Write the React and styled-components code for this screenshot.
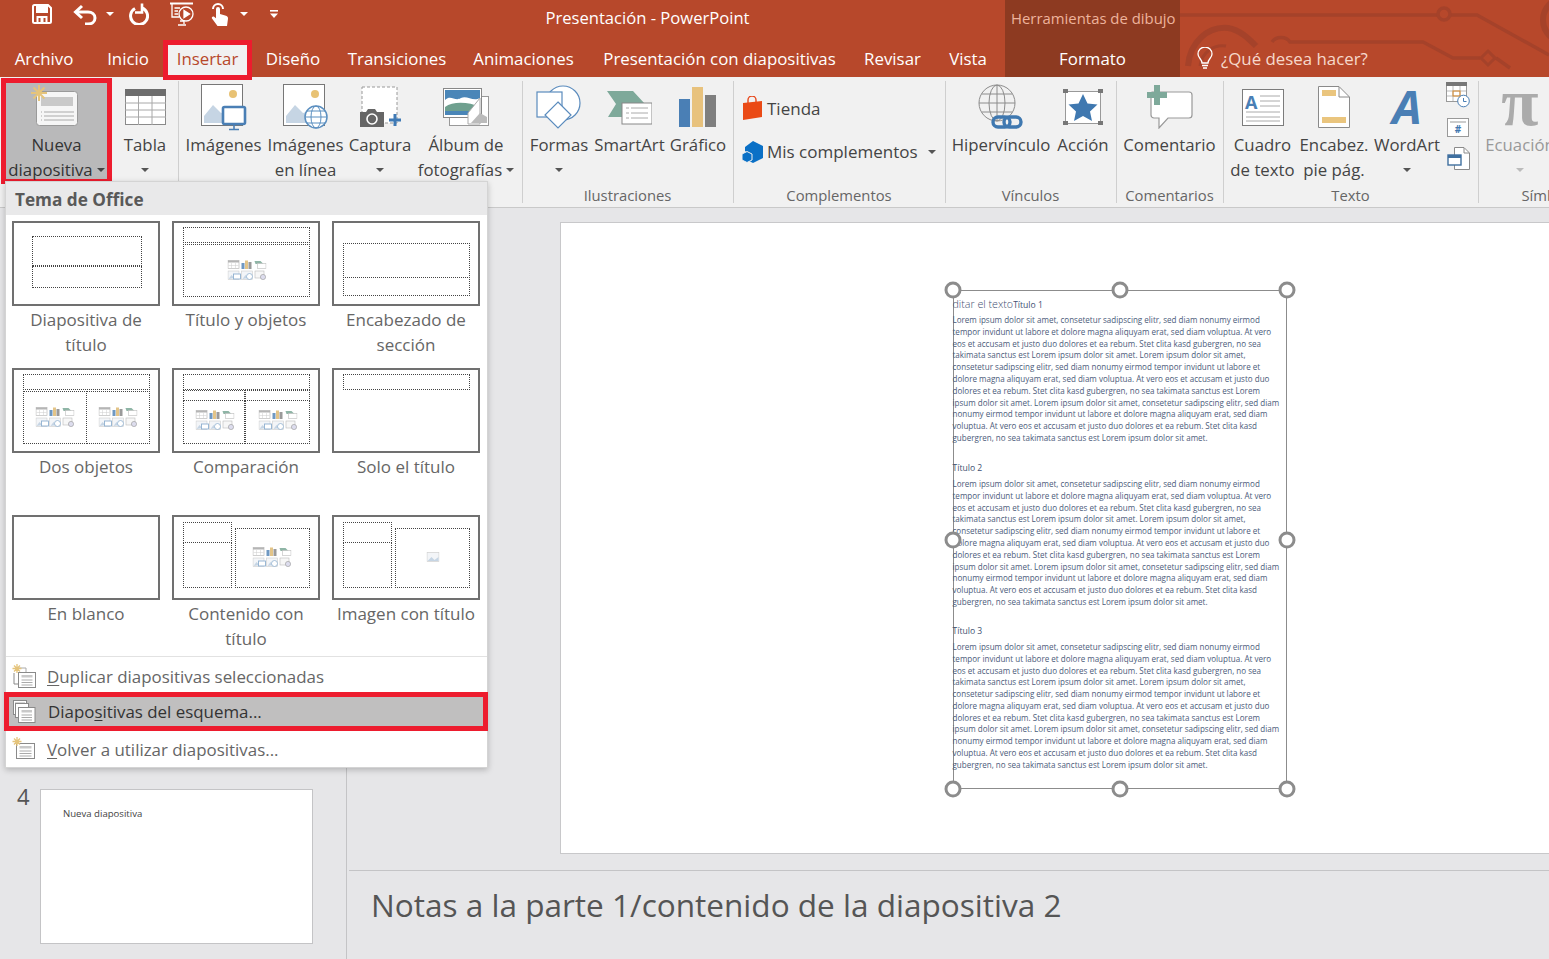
import React from "react";
import styled, { createGlobalStyle } from "styled-components";

const FONT = `"Open Sans", "Noto Sans", "Liberation Sans", sans-serif`;

const GlobalStyle = createGlobalStyle`
  html, body {
    margin: 0;
    padding: 0;
    background: #e6e6e8;
  }
  body {
    font-family: ${FONT};
  }
`;

const LOREM = [
  "Lorem ipsum dolor sit amet, consetetur sadipscing elitr, sed diam nonumy eirmod",
  "tempor invidunt ut labore et dolore magna aliquyam erat, sed diam voluptua. At vero",
  "eos et accusam et justo duo dolores et ea rebum. Stet clita kasd gubergren, no sea",
  "takimata sanctus est Lorem ipsum dolor sit amet. Lorem ipsum dolor sit amet,",
  "consetetur sadipscing elitr, sed diam nonumy eirmod tempor invidunt ut labore et",
  "dolore magna aliquyam erat, sed diam voluptua. At vero eos et accusam et justo duo",
  "dolores et ea rebum. Stet clita kasd gubergren, no sea takimata sanctus est Lorem",
  "ipsum dolor sit amet. Lorem ipsum dolor sit amet, consetetur sadipscing elitr, sed diam",
  "nonumy eirmod tempor invidunt ut labore et dolore magna aliquyam erat, sed diam",
  "voluptua. At vero eos et accusam et justo duo dolores et ea rebum. Stet clita kasd",
  "gubergren, no sea takimata sanctus est Lorem ipsum dolor sit amet.",
];

const TABS = [
  { label: "Archivo", w: 88 },
  { label: "Inicio", w: 80 },
  { label: "Insertar", w: 89, active: true },
  { label: "Diseño", w: 82 },
  { label: "Transiciones", w: 126 },
  { label: "Animaciones", w: 127 },
  { label: "Presentación con diapositivas", w: 265 },
  { label: "Revisar", w: 81 },
  { label: "Vista", w: 70 },
];

const Page = styled.div`
  position: relative;
  width: 1549px;
  height: 959px;
  overflow: hidden;
  display: flex;
  flex-direction: column;
  background: #e6e6e8;
`;

/* ---------- title + tabs ---------- */
const Header = styled.header`
  position: relative;
  height: 77px;
  background: #b7482b;
  color: #fff;
  flex-shrink: 0;
`;

const Circuit = styled.svg`
  position: absolute;
  left: 1180px;
  top: 0;
`;

const TitleRow = styled.div`
  position: relative;
  height: 40px;
  display: flex;
  align-items: flex-start;
`;

const QuickBar = styled.div`
  width: 1005px;
  position: relative;
  display: flex;
  align-items: center;
  height: 28px;
  padding-left: 32px;
  box-sizing: border-box;
`;

const QuickIcon = styled.svg`
  display: block;
  flex-shrink: 0;
  margin-left: ${(p) => p.$ml || 0}px;
`;

const AppTitle = styled.div`
  position: absolute;
  left: 0;
  width: 1295px;
  top: 6px;
  text-align: center;
  font-size: 16.6px;
  line-height: 24px;
  white-space: nowrap;
  pointer-events: none;
`;

const ContextPanel = styled.div`
  position: absolute;
  left: 1005px;
  top: 0;
  width: 175px;
  height: 77px;
  background: #8d3a21;
`;

const ContextTitle = styled.div`
  padding: 6px 0 0 6px;
  font-size: 14.9px;
  line-height: 24px;
  color: #eeb39c;
  white-space: nowrap;
`;

const TabRow = styled.nav`
  position: relative;
  height: 37px;
  display: flex;
  font-size: 16.85px;
`;

const Tab = styled.div`
  box-sizing: border-box;
  width: ${(p) => p.$w}px;
  height: 37px;
  line-height: 37px;
  text-align: center;
  white-space: nowrap;
  color: #fff;
`;

const ActiveTab = styled(Tab)`
  position: relative;
  z-index: 2;
  margin-left: -5px;
  height: 40px;
  background: #f1f1f1;
  color: #b7482b;
  border: 5px solid #ed1c2e;
  line-height: 27px;
`;

const FormatTab = styled(Tab)`
  position: relative;
  margin-left: 2px;
`;

const Search = styled.div`
  position: relative;
  display: flex;
  align-items: center;
  height: 37px;
  margin-left: 17px;
  gap: 8px;
  color: #f6d9cc;
  white-space: nowrap;
`;

/* ---------- ribbon ---------- */
const Ribbon = styled.section`
  height: 131px;
  box-sizing: border-box;
  display: flex;
  background: #f1f1f1;
  border-bottom: 1px solid #c9c9c9;
  flex-shrink: 0;
  color: #444;
  font-size: 17px;
`;

const RibbonGroup = styled.div`
  box-sizing: border-box;
  width: ${(p) => p.$w}px;
  flex-shrink: 0;
  position: relative;
  display: flex;
  flex-direction: column;
  padding-top: 5px;
  &::after {
    content: "";
    position: absolute;
    right: -1px;
    top: 4px;
    bottom: 4px;
    width: 1px;
    background: #cfcfcf;
  }
`;

const GroupBody = styled.div`
  height: 102px;
  display: flex;
  gap: ${(p) => p.$gap || 5}px;
  padding-left: ${(p) => p.$pad ?? 7}px;
`;

const GroupLabel = styled.div`
  height: 22px;
  line-height: 22px;
  text-align: center;
  font-size: 14.8px;
  color: #666;
  white-space: nowrap;
`;

const RibbonButton = styled.div`
  box-sizing: border-box;
  width: ${(p) => p.$w}px;
  flex-shrink: 0;
  display: flex;
  flex-direction: column;
  align-items: center;
  color: ${(p) => (p.$off ? "#999" : "#444")};
  white-space: nowrap;
  font-size: 16.8px;
`;

const NewSlideButton = styled(RibbonButton)`
  width: 111px;
  height: 106px;
  margin-top: -4px;
  margin-left: 1px;
  border: 5px solid #ed1c2e;
  background: #b9b9ba;
  color: #333;
`;

const IconBox = styled.div`
  height: ${(p) => p.$h || 50}px;
  display: flex;
  align-items: center;
  justify-content: center;
  flex-shrink: 0;
`;

const BtnLine = styled.div`
  height: 25px;
  line-height: 25px;
  display: flex;
  align-items: center;
  justify-content: center;
  gap: 4px;
`;

const Caret = styled.span`
  display: inline-block;
  width: 0;
  height: 0;
  border-left: 4px solid transparent;
  border-right: 4px solid transparent;
  border-top: 4px solid ${(p) => p.$c || "#555"};
  margin-left: ${(p) => p.$ml || 0}px;
`;

const ComplementRows = styled.div`
  display: flex;
  flex-direction: column;
  gap: 16px;
  padding-top: 13px;
`;

const ComplementRow = styled.div`
  display: flex;
  align-items: center;
  gap: 4px;
  height: 27px;
  white-space: nowrap;
`;

const SmallIcons = styled.div`
  display: flex;
  flex-direction: column;
  align-items: center;
  gap: 10px;
`;

/* ---------- workspace ---------- */
const Workspace = styled.main`
  flex: 1;
  display: flex;
  min-height: 0;
`;

const SlidesPane = styled.aside`
  box-sizing: border-box;
  width: 347px;
  flex-shrink: 0;
  border-right: 1px solid #c4c4c6;
  display: flex;
  align-items: flex-end;
  padding: 0 0 15px 17px;
  gap: 14px;
`;

const SlideNumber = styled.div`
  align-self: flex-end;
  height: 154px;
  font-size: 22px;
  line-height: 12px;
  color: #555;
  width: 9px;
`;

const SlideThumb = styled.div`
  box-sizing: border-box;
  width: 273px;
  height: 155px;
  background: #fff;
  border: 1px solid #c4c4c6;
  padding: 18px 0 0 22px;
  font-size: 9.6px;
  line-height: 12px;
  color: #444;
`;

const MainColumn = styled.div`
  flex: 1;
  min-width: 0;
  display: flex;
  flex-direction: column;
`;

const Canvas = styled.div`
  height: 662px;
  box-sizing: border-box;
  padding: 14px 0 0 213px;
  overflow: hidden;
`;

const Slide = styled.div`
  box-sizing: border-box;
  width: 1122px;
  height: 632px;
  background: #fff;
  border: 1px solid #c8c8ca;
  padding: 67px 0 0 392px;
`;

const TextBox = styled.div`
  position: relative;
  box-sizing: border-box;
  width: 334px;
  height: 499px;
  border: 1.5px solid #8c8c8c;
  padding-top: 6px;
  color: #4b5b7a;
`;

const Handle = styled.span`
  position: absolute;
  box-sizing: border-box;
  width: 17px;
  height: 17px;
  border-radius: 50%;
  border: 3px solid #8c8c8c;
  background: #fff;
  left: calc(${(p) => p.$x}% + ${(p) => (p.$x - 50) / 50}px);
  top: calc(${(p) => p.$y}% + ${(p) => (p.$y - 50) / 50}px);
  transform: translate(-50%, -50%);
`;

const TextClip = styled.div`
  margin-left: -1.5px;
  white-space: nowrap;
  font-size: 8.05px;
  line-height: 11.8px;
`;

const Section = styled.div`
  margin-bottom: ${(p) => p.$mb || 0}px;
`;

const SectionHead = styled.div`
  height: 17px;
  line-height: 15px;
  font-size: 8.6px;
  color: #3f5173;
`;

const EditHint = styled.span`
  font-size: 10.7px;
  font-weight: 300;
`;

const BodyLine = styled.div`
  height: 11.8px;
`;

const Notes = styled.div`
  flex: 1;
  margin-left: 2px;
  border-top: 1px solid #c4c4c6;
  padding: 12px 0 0 22px;
  font-size: 31.55px;
  line-height: 44px;
  color: #555;
  white-space: nowrap;
`;

/* ---------- layouts menu ---------- */
const Menu = styled.div`
  position: absolute;
  left: 5px;
  top: 181px;
  width: 483px;
  height: 587px;
  background: #fff;
  border: 1px solid #d4d4d4;
  box-sizing: border-box;
  box-shadow: 0 2px 6px rgba(0, 0, 0, 0.22);
  display: flex;
  flex-direction: column;
  z-index: 3;
`;

const MenuHead = styled.div`
  height: 33px;
  line-height: 35px;
  background: #e9e9ea;
  padding-left: 9px;
  font-size: 17.2px;
  font-weight: 700;
  color: #595959;
  flex-shrink: 0;
`;

const LayoutGrid = styled.div`
  display: grid;
  grid-template-columns: repeat(3, 148px);
  grid-auto-rows: 147px;
  column-gap: 12px;
  padding: 6px 0 0 6px;
  height: 441px;
  box-sizing: border-box;
  flex-shrink: 0;
`;

const LayoutCell = styled.div`
  display: flex;
  flex-direction: column;
  align-items: center;
`;

const LayoutThumb = styled.div`
  position: relative;
  box-sizing: border-box;
  width: 148px;
  height: 85px;
  border: 2px solid #707070;
  background: #fff;
`;

const Placeholder = styled.div`
  position: absolute;
  box-sizing: border-box;
  left: ${(p) => p.$x - 2}px;
  top: ${(p) => p.$y - 2}px;
  width: ${(p) => p.$w}px;
  height: ${(p) => p.$h}px;
  border: 1px dotted #444;
`;

const MiniWrap = styled.div`
  position: absolute;
  left: ${(p) => p.$x - 2}px;
  top: ${(p) => p.$y - 2}px;
  transform: translate(-50%, -50%);
  line-height: 0;
`;

const LayoutName = styled.div`
  width: 156px;
  margin-top: 1px;
  text-align: center;
  font-size: 17px;
  line-height: 25px;
  color: #666;
`;

const MenuList = styled.div`
  border-top: 1px solid #e2e2e2;
  padding-top: 1px;
  display: flex;
  flex-direction: column;
`;

const MenuItem = styled.div`
  box-sizing: border-box;
  height: 36px;
  display: flex;
  align-items: center;
  gap: 11px;
  padding-left: 6px;
  font-size: 16.9px;
  color: #666;
  white-space: nowrap;
  u {
    text-underline-offset: 2px;
  }
`;

const SelectedItem = styled(MenuItem)`
  position: relative;
  height: 39px;
  margin: -2px -1px 0 -2px;
  padding-left: 3px;
  border: 5px solid #ed1c2e;
  background: #c0bfbf;
  color: #333;
  gap: 12px;
`;

/* ---------- icons ---------- */
const CIRCUIT = "#a5422a";

const CircuitArt = () => (
  <Circuit width="369" height="77" viewBox="0 0 369 77" fill="none" stroke={CIRCUIT} strokeWidth="3.5">
    <path d="M0 15H258M270 15H297L369 55" />
    <circle cx="264" cy="14" r="6" />
    <path d="M8 66C10 42 28 26 48 28C60 30 68 38 76 46" strokeWidth="6" />
    <path d="M20 66C22 52 34 44 46 46" strokeWidth="3" />
    <path d="M92 42C96 36 106 36 110 42H243L273 58H300" />
    <path d="M316 58L330 68" />
    <path d="M308 51L315 58L308 65L301 58Z" strokeWidth="3" />
    <circle cx="385" cy="20" r="22" strokeWidth="6" />
  </Circuit>
);

const SaveIcon = () => (
  <QuickIcon width="20" height="20" viewBox="0 0 20 20">
    <path d="M1 2.5A1.5 1.5 0 0 1 2.5 1H16l3 3v13.5a1.5 1.5 0 0 1-1.5 1.5h-15A1.5 1.5 0 0 1 1 17.5Z" fill="none" stroke="#fff" strokeWidth="2" />
    <rect x="4" y="2" width="12" height="7" fill="#fff" />
    <path d="M5.5 19v-6h9v6" fill="none" stroke="#fff" strokeWidth="2" />
    <rect x="8.5" y="14" width="3" height="5" fill="#fff" />
  </QuickIcon>
);

const UndoIcon = () => (
  <QuickIcon $ml={21} width="24" height="21" viewBox="0 0 24 21" fill="none" stroke="#fff" strokeWidth="3">
    <path d="M9 2L2.5 8L9 14" />
    <path d="M3 8H15C19 8 22 10.5 22 14S19 20 15 20H12" />
  </QuickIcon>
);

const RedoIcon = () => (
  <QuickIcon $ml={14} width="21" height="22" viewBox="0 0 21 22" fill="none" stroke="#fff" strokeWidth="3">
    <path d="M7 5.5A8.5 8.5 0 1 0 14 5" />
    <path d="M14 0.5V9.5H7" strokeWidth="2.6" />
  </QuickIcon>
);

const ShowIcon = () => (
  <QuickIcon $ml={21} width="24" height="24" viewBox="0 0 24 24" fill="none" stroke="#fff" strokeWidth="1.3">
    <path d="M0 1.5H23" strokeWidth="2" />
    <path d="M2 2V15H9" />
    <path d="M4.5 6H10M4.5 9H8M4.5 12H8" />
    <circle cx="16" cy="12" r="7" />
    <path d="M14 8.5L19.5 12L14 15.5Z" fill="#fff" />
    <path d="M10 19H14V22M8 23H16" />
  </QuickIcon>
);

const TouchIcon = () => (
  <QuickIcon $ml={17} width="18" height="24" viewBox="0 0 18 24" fill="#fff">
    <path d="M5 7a2 2 0 0 1 4 0v5l6 1.8c1.5.5 2.2 1.5 2 3L16 24H6.5L1 16.5c-.8-1.2.8-2.8 2.1-1.8L5 16.2Z" />
    <path d="M2 7a5 5 0 1 1 10 0" fill="none" stroke="#fff" strokeWidth="2" />
  </QuickIcon>
);

const CustomizeIcon = () => (
  <QuickIcon $ml={22} width="8" height="8" viewBox="0 0 8 8" fill="#fff">
    <rect x="0" y="0" width="8" height="1.6" />
    <path d="M0 3.5H8L4 8Z" />
  </QuickIcon>
);

const BulbIcon = () => (
  <svg width="16" height="23" viewBox="0 0 16 23" fill="none" stroke="#fff" strokeWidth="1.3">
    <path d="M5 16C5 12 1 11 1 7A7 7 0 0 1 15 7C15 11 11 12 11 16Z" />
    <path d="M5 18.5H11M6 21H10" strokeWidth="1.6" />
  </svg>
);

const NewSlideIcon = () => (
  <svg width="52" height="46" viewBox="0 0 52 46">
    <rect x="5.500" y="6.500" width="41" height="34" rx="3" fill="#f6f6f6" stroke="#9a9a9a" />
    <rect x="10" y="12" width="32" height="9" fill="#c9c9c9" />
    <path d="M13 27H43M13 31H43M13 35H43M10 27h1M10 31h1M10 35h1" stroke="#aaa" />
    <path d="M8 0V16M0 8H16M2.500 2.500L13.500 13.500M13.500 2.500L2.500 13.500" stroke="#e5c47b" strokeWidth="2" />
  </svg>
);

const TableIcon = () => (
  <svg width="41" height="36" viewBox="0 0 41 36">
    <rect x="0.5" y="0.5" width="40" height="35" fill="#fff" stroke="#8a8a8a" />
    <rect x="0" y="0" width="41" height="7" fill="#6d6d6d" />
    <path d="M13.5 7V36M27 7V36M0 14H41M0 21H41M0 28H41" stroke="#a8a8a8" />
  </svg>
);

const PhotoBase = () => (
  <>
    <rect x="0.5" y="0.5" width="41" height="41" fill="#fff" stroke="#777" />
    <circle cx="32" cy="10" r="4" fill="#e8c274" />
    <path d="M3 39V32L12 21L20 29L26 27V39Z" fill="#c6d5e4" />
  </>
);

const PicturesIcon = () => (
  <svg width="46" height="47" viewBox="0 0 46 47">
    <PhotoBase />
    <rect x="22" y="23" width="22" height="17" rx="1.5" fill="#fff" stroke="#4a7fb5" strokeWidth="2.6" />
    <path d="M33 41V45M28 45.5H38" stroke="#4a7fb5" strokeWidth="1.6" />
  </svg>
);

const OnlinePicturesIcon = () => (
  <svg width="46" height="47" viewBox="0 0 46 47">
    <PhotoBase />
    <circle cx="33" cy="33" r="11" fill="#fff" stroke="#5b8fc0" strokeWidth="1.5" />
    <ellipse cx="33" cy="33" rx="5" ry="11" fill="none" stroke="#5b8fc0" />
    <path d="M22 33H44M24 27H42M24 39H42" stroke="#5b8fc0" />
  </svg>
);

const CaptureIcon = () => (
  <svg width="42" height="42" viewBox="0 0 42 42">
    <rect x="3" y="1" width="35" height="36" fill="#fff" stroke="#999" strokeDasharray="3 2" />
    <path d="M1 26H7L9 23H16L18 26H25V41H1Z" fill="#666" />
    <circle cx="13" cy="33" r="5" fill="#666" stroke="#fff" strokeWidth="1.6" />
    <path d="M36 28V40M30 34H42" stroke="#3f7ab5" strokeWidth="3" />
  </svg>
);

const AlbumIcon = () => (
  <svg width="46" height="38" viewBox="0 0 46 38">
    <rect x="6.5" y="8.5" width="39" height="29" fill="#fff" stroke="#999" />
    <rect x="0.5" y="0.5" width="38" height="29" fill="#fff" stroke="#888" />
    <rect x="2" y="2" width="35" height="17" fill="#4a86b8" />
    <path d="M2 12C8 6 12 14 18 10C24 7 30 14 37 10V19H2Z" fill="#fff" />
    <path d="M2 19C10 13 26 14 37 19V23H2Z" fill="#6fa08f" />
    <rect x="2" y="23" width="24" height="4" fill="#4a86b8" />
    <path d="M25 25L37 10V36H25Z" fill="#fff" stroke="#aaa" />
    <path d="M28 35L37 25L44 29V35Z" fill="#bbb" />
  </svg>
);

const ShapesIcon = () => (
  <svg width="46" height="44" viewBox="0 0 46 44" fill="#fff" stroke="#5a8bbd" strokeWidth="1.2">
    <circle cx="27" cy="18" r="17" />
    <rect x="1" y="7" width="25" height="25" />
    <path d="M22 17L35 30L22 43L9 30Z" />
  </svg>
);

const SmartArtIcon = () => (
  <svg width="45" height="36" viewBox="0 0 45 36">
    <path d="M0 2H26L38 15V28H1L9 15Z" fill="#7ea99a" />
    <rect x="15" y="14" width="30" height="21" fill="#fff" stroke="#888" />
    <path d="M24 19H41M24 24H41M24 29H41M19 19H22M19 24H22M19 29H22" stroke="#aaa" />
  </svg>
);

const ChartIcon = () => (
  <svg width="38" height="40" viewBox="0 0 38 40">
    <rect x="0" y="12" width="11" height="28" fill="#4a7fb5" />
    <rect x="13" y="0" width="11" height="40" fill="#e8c27d" />
    <rect x="26" y="8" width="11" height="32" fill="#7f7f7f" />
  </svg>
);

const StoreIcon = () => (
  <svg width="21" height="25" viewBox="0 0 21 25">
    <path d="M6 7V4a4 4 0 0 1 8 0v3" fill="none" stroke="#e8481c" strokeWidth="1.4" />
    <path d="M1 7L20 5V21L1 24Z" fill="#ea4a16" />
  </svg>
);

const AddinsIcon = () => (
  <svg width="21" height="22" viewBox="0 0 21 22" fill="#0a70c6">
    <path d="M11 0L21 5V17L11 22L7 20V13L3 10V6Z" />
    <path d="M0 13L5 10.5L10 13V19L5 21.5L0 19Z" stroke="#f1f1f1" />
  </svg>
);

const LinkIcon = () => (
  <svg width="46" height="46" viewBox="0 0 46 46">
    <g fill="none" stroke="#8c8c8c">
      <circle cx="19" cy="19" r="18" />
      <ellipse cx="19" cy="19" rx="8" ry="18" />
      <path d="M19 1V37M1 19H37M4 10H34M4 28H34" />
    </g>
    <g fill="none" stroke="#3f78b0" strokeWidth="3.4">
      <rect x="15" y="33" width="17" height="10" rx="5" />
      <rect x="26" y="33" width="17" height="10" rx="5" />
    </g>
  </svg>
);

const ActionIcon = () => (
  <svg width="40" height="38" viewBox="0 0 40 38">
    <rect x="2.5" y="3.5" width="35" height="32" fill="#fff" stroke="#999" />
    <rect x="0" y="1" width="5" height="4" fill="#777" />
    <rect x="35" y="1" width="5" height="4" fill="#777" />
    <rect x="0" y="33" width="5" height="4" fill="#777" />
    <rect x="35" y="33" width="5" height="4" fill="#777" />
    <path d="M20 6L24.5 15.5L34.5 16.5L27 23.5L29 33L20 28L11 33L13 23.5L5.5 16.5L15.5 15.5Z" fill="#3f78b0" />
  </svg>
);

const CommentIcon = () => (
  <svg width="46" height="44" viewBox="0 0 46 44">
    <path d="M5 7H42A3 3 0 0 1 45 10V30A3 3 0 0 1 42 33H21L12 43V33H7A3 3 0 0 1 4 30V10Z" fill="#fff" stroke="#999" strokeWidth="1.2" />
    <path d="M10 0V20M0 10H20" stroke="#7ea99a" strokeWidth="6" />
  </svg>
);

const TextBoxIcon = () => (
  <svg width="42" height="37" viewBox="0 0 42 37">
    <rect x="0.5" y="0.5" width="41" height="36" fill="#fff" stroke="#7c7c7c" />
    <text x="3" y="20" fontFamily={FONT} fontWeight="700" fontSize="18" fill="#4a7fb5">A</text>
    <path d="M18 7H38M18 12H38M18 17H38M4 23H38M4 28H38M4 32H38" stroke="#aaa" />
  </svg>
);

const HeaderFooterIcon = () => (
  <svg width="32" height="42" viewBox="0 0 32 42">
    <path d="M0.5 0.5H21L31.5 11V41.5H0.5Z" fill="#fff" stroke="#8a8a8a" />
    <path d="M21 1V11H31" fill="none" stroke="#8a8a8a" />
    <rect x="4" y="4" width="14" height="6" fill="#eac57e" />
    <rect x="4" y="31" width="24" height="6" fill="#eac57e" />
  </svg>
);

const OpenSvg = styled.svg`
  overflow: visible;
`;

const WordArtIcon = () => (
  <OpenSvg width="36" height="42" viewBox="0 0 36 42">
    <text x="18" y="38" textAnchor="middle" fontFamily={FONT} fontStyle="italic" fontWeight="700" fontSize="47" fill="#4a7fb5">A</text>
  </OpenSvg>
);

const DateIcon = () => (
  <svg width="24" height="26" viewBox="0 0 24 26">
    <rect x="0.5" y="0.5" width="20" height="19" fill="#fff" stroke="#999" />
    <rect x="0" y="0" width="21" height="4" fill="#777" />
    <path d="M7 4V19M14 4V19M1 9H20M1 14H20" stroke="#bbb" />
    <rect x="7" y="9" width="7" height="5" fill="none" stroke="#d98a2b" />
    <circle cx="17.5" cy="19" r="5.8" fill="#fff" stroke="#4a7fb5" />
    <path d="M17.5 16V19.5H20.5" fill="none" stroke="#4a7fb5" />
  </svg>
);

const NumberIcon = () => (
  <svg width="22" height="19" viewBox="0 0 22 19">
    <rect x="0.5" y="0.5" width="21" height="18" fill="#fff" stroke="#999" />
    <path d="M3 4H19" stroke="#999" />
    <text x="11" y="15" textAnchor="middle" fontFamily={FONT} fontWeight="700" fontSize="10" fill="#3f78b0">#</text>
  </svg>
);

const ObjectIcon = () => (
  <svg width="23" height="23" viewBox="0 0 23 23">
    <path d="M7.5 0.5H17L22.5 6V22.5H7.5Z" fill="#fff" stroke="#8a8a8a" />
    <path d="M17 1V6H22" fill="none" stroke="#8a8a8a" />
    <rect x="1" y="8" width="13" height="10" fill="#fff" stroke="#3f6f9f" strokeWidth="1.4" />
    <rect x="1" y="8" width="13" height="3" fill="#3f6f9f" />
  </svg>
);

const PiIcon = () => (
  <OpenSvg width="42" height="42" viewBox="0 0 42 42">
    <text x="21" y="39" textAnchor="middle" fontFamily={`"Liberation Serif", serif`} fontWeight="700" fontSize="68" fill="#ababab">π</text>
  </OpenSvg>
);

const MiniContent = ({ single }) =>
  single ? (
    <svg width="13" height="10" viewBox="0 0 13 10">
      <rect x="0.5" y="0.5" width="12" height="9" fill="#f3f5f8" stroke="#c9c9c9" strokeWidth="0.6" />
      <path d="M1 9L5 5L8 8L12 5V9Z" fill="#c6d5e4" />
    </svg>
  ) : (
    <svg width="39" height="20" viewBox="0 0 39 20">
      <rect x="0.5" y="0.5" width="11" height="8" fill="#fff" stroke="#bbb" strokeWidth="0.7" />
      <rect x="0.5" y="0.5" width="11" height="2" fill="#b5b5b5" />
      <path d="M4 3V8M8 3V8M1 5.5H11" stroke="#ccc" strokeWidth="0.5" />
      <rect x="14" y="3" width="3" height="6" fill="#6f98c2" />
      <rect x="17.5" y="0.5" width="3" height="8.5" fill="#e3c488" />
      <rect x="21" y="2" width="3" height="7" fill="#9a9a9a" />
      <path d="M27 1H33L36 4H28Z" fill="#8fb5a6" />
      <rect x="30" y="3.5" width="8.5" height="5" fill="#fff" stroke="#bbb" strokeWidth="0.6" />
      <rect x="0.5" y="11" width="11" height="8.5" fill="#f3f5f8" stroke="#ccc" strokeWidth="0.6" />
      <path d="M1 19L4 15L7 18Z" fill="#c6d5e4" />
      <rect x="6" y="14" width="7" height="5" fill="#fff" stroke="#8fb0d0" strokeWidth="0.9" />
      <rect x="14" y="11" width="11" height="8.5" fill="#f3f5f8" stroke="#ccc" strokeWidth="0.6" />
      <path d="M15 19L18 15L21 18Z" fill="#c6d5e4" />
      <circle cx="22" cy="16.5" r="3" fill="#fff" stroke="#8fb0d0" strokeWidth="0.8" />
      <rect x="27.5" y="11" width="9" height="7" fill="#f7f7f7" stroke="#bbb" strokeWidth="0.6" />
      <circle cx="35.5" cy="17" r="2.6" fill="#dde" stroke="#999" strokeWidth="0.6" />
    </svg>
  );

const SlideLines = ({ x, y, w = 22, star }) => (
  <g>
    <rect x={x} y={y} width={w} height={15} fill="#fff" stroke="#8a8a8a" />
    <rect x={x + 3} y={y + 2.5} width={w - 6} height={2.5} fill="#c9c9c9" />
    <path d={`M${x + 3} ${y + 7.5}H${x + w - 3}M${x + 3} ${y + 10}H${x + w - 3}M${x + 3} ${y + 12.5}H${x + w - 3}`} stroke="#aaa" />
    {star && <path d="M5 0V9M.5 4.5H9.5M2 1.5L8 7.500M8 1.5L2 7.500" stroke="#e5c47b" strokeWidth="1.3" />}
  </g>
);

const DuplicateIcon = () => (
  <svg width="24" height="24" viewBox="0 0 24 24">
    <path d="M2 9V20H7" fill="none" stroke="#8a8a8a" />
    <path d="M6 4H14V8" fill="none" stroke="#aaa" />
    <SlideLines x={6.5} y={8.5} w={17} star />
  </svg>
);

const OutlineIcon = () => (
  <svg width="24" height="24" viewBox="0 0 24 24">
    <rect x="1.5" y="0.500" width="13" height="14" fill="#fff" stroke="#8a8a8a" />
    <path d="M3 3H13M3 6H13M3 9H13" stroke="#aaa" />
    <rect x="3.500" y="3.500" width="13" height="14" fill="#fff" stroke="#8a8a8a" />
    <SlideLines x={6.5} y={7.5} w={16.5} />
  </svg>
);

const ReuseIcon = () => (
  <svg width="24" height="24" viewBox="0 0 24 24">
    <SlideLines x={4.5} y={6.5} w={18} star />
  </svg>
);

/* ---------- data for the layout thumbnails ---------- */
const TOP = { x: 11, y: 6, w: 127, h: 16 };
const LAYOUTS = [
  {
    name: "Diapositiva de título",
    boxes: [
      { x: 19.5, y: 15, w: 110, h: 30 },
      { x: 19.5, y: 44.5, w: 110, h: 22 },
    ],
  },
  {
    name: "Título y objetos",
    boxes: [TOP, { x: 11, y: 23, w: 127, h: 53 }],
    minis: [{ x: 74.5, y: 49 }],
  },
  {
    name: "Encabezado de sección",
    boxes: [
      { x: 11, y: 22, w: 127, h: 35 },
      { x: 11, y: 56, w: 127, h: 19 },
    ],
  },
  {
    name: "Dos objetos",
    boxes: [TOP, { x: 11, y: 23, w: 64, h: 53 }, { x: 74, y: 23, w: 64, h: 53 }],
    minis: [{ x: 43, y: 49 }, { x: 106, y: 49 }],
  },
  {
    name: "Comparación",
    boxes: [
      TOP,
      { x: 11, y: 22, w: 62, h: 11 },
      { x: 73, y: 22, w: 65, h: 11 },
      { x: 11, y: 32, w: 62, h: 44 },
      { x: 73, y: 32, w: 65, h: 44 },
    ],
    minis: [{ x: 43, y: 52 }, { x: 106, y: 52 }],
  },
  { name: "Solo el título", boxes: [TOP] },
  { name: "En blanco", boxes: [] },
  {
    name: "Contenido con título",
    boxes: [
      { x: 11, y: 7, w: 49, h: 21 },
      { x: 11, y: 27, w: 49, h: 46 },
      { x: 63, y: 13, w: 75, h: 60 },
    ],
    minis: [{ x: 100, y: 42 }],
  },
  {
    name: "Imagen con título",
    boxes: [
      { x: 11, y: 7, w: 49, h: 21 },
      { x: 11, y: 27, w: 49, h: 46 },
      { x: 63, y: 13, w: 75, h: 60 },
    ],
    minis: [{ x: 100.5, y: 42, single: true }],
  },
];

const HANDLES = [
  [0, 0],
  [50, 0],
  [100, 0],
  [0, 50],
  [100, 50],
  [0, 100],
  [50, 100],
  [100, 100],
];

const SECTIONS = [
  { head: <><EditHint>ditar el texto</EditHint>Título 1</>, mb: 17.2 },
  { head: "Título 2", mb: 16.2 },
  { head: "Título 3", mb: 0 },
];

const App = () => (
  <Page>
    <GlobalStyle />
    <Header>
      <CircuitArt />
      <ContextPanel>
        <ContextTitle>Herramientas de dibujo</ContextTitle>
      </ContextPanel>
      <TitleRow>
        <QuickBar>
          <SaveIcon />
          <UndoIcon />
          <Caret $c="#fff" $ml={9} />
          <RedoIcon />
          <ShowIcon />
          <TouchIcon />
          <Caret $c="#fff" $ml={11} />
          <CustomizeIcon />
        </QuickBar>
        <AppTitle>Presentación - PowerPoint</AppTitle>
      </TitleRow>
      <TabRow>
        {TABS.map((t) =>
          t.active ? (
            <ActiveTab key={t.label} $w={t.w}>{t.label}</ActiveTab>
          ) : (
            <Tab key={t.label} $w={t.w}>{t.label}</Tab>
          )
        )}
        <FormatTab $w={175}>Formato</FormatTab>
        <Search>
          <BulbIcon />
          ¿Qué desea hacer?
        </Search>
      </TabRow>
    </Header>

    <Ribbon>
      <RibbonGroup $w={178}>
        <GroupBody $pad={0} $gap={3}>
          <NewSlideButton>
            <IconBox $h={49}><NewSlideIcon /></IconBox>
            <BtnLine>Nueva</BtnLine>
            <BtnLine>diapositiva<Caret $c="#444" /></BtnLine>
          </NewSlideButton>
          <RibbonButton $w={60}>
            <IconBox><TableIcon /></IconBox>
            <BtnLine>Tabla</BtnLine>
            <BtnLine><Caret /></BtnLine>
          </RibbonButton>
        </GroupBody>
      </RibbonGroup>

      <RibbonGroup $w={344}>
        <GroupBody>
          <RibbonButton $w={77}>
            <IconBox><PicturesIcon /></IconBox>
            <BtnLine>Imágenes</BtnLine>
          </RibbonButton>
          <RibbonButton $w={77}>
            <IconBox><OnlinePicturesIcon /></IconBox>
            <BtnLine>Imágenes</BtnLine>
            <BtnLine>en línea</BtnLine>
          </RibbonButton>
          <RibbonButton $w={62}>
            <IconBox><CaptureIcon /></IconBox>
            <BtnLine>Captura</BtnLine>
            <BtnLine><Caret /></BtnLine>
          </RibbonButton>
          <RibbonButton $w={100}>
            <IconBox><AlbumIcon /></IconBox>
            <BtnLine>Álbum de</BtnLine>
            <BtnLine>fotografías<Caret /></BtnLine>
          </RibbonButton>
        </GroupBody>
      </RibbonGroup>

      <RibbonGroup $w={211}>
        <GroupBody>
          <RibbonButton $w={60}>
            <IconBox><ShapesIcon /></IconBox>
            <BtnLine>Formas</BtnLine>
            <BtnLine><Caret /></BtnLine>
          </RibbonButton>
          <RibbonButton $w={71}>
            <IconBox><SmartArtIcon /></IconBox>
            <BtnLine>SmartArt</BtnLine>
          </RibbonButton>
          <RibbonButton $w={56}>
            <IconBox><ChartIcon /></IconBox>
            <BtnLine>Gráfico</BtnLine>
          </RibbonButton>
        </GroupBody>
        <GroupLabel>Ilustraciones</GroupLabel>
      </RibbonGroup>

      <RibbonGroup $w={212}>
        <GroupBody $pad={9}>
          <ComplementRows>
            <ComplementRow><StoreIcon />Tienda</ComplementRow>
            <ComplementRow><AddinsIcon />Mis complementos<Caret $ml={6} /></ComplementRow>
          </ComplementRows>
        </GroupBody>
        <GroupLabel>Complementos</GroupLabel>
      </RibbonGroup>

      <RibbonGroup $w={171}>
        <GroupBody $gap={6}>
          <RibbonButton $w={98}>
            <IconBox><LinkIcon /></IconBox>
            <BtnLine>Hipervínculo</BtnLine>
          </RibbonButton>
          <RibbonButton $w={54}>
            <IconBox><ActionIcon /></IconBox>
            <BtnLine>Acción</BtnLine>
          </RibbonButton>
        </GroupBody>
        <GroupLabel>Vínculos</GroupLabel>
      </RibbonGroup>

      <RibbonGroup $w={107}>
        <GroupBody>
          <RibbonButton $w={93}>
            <IconBox><CommentIcon /></IconBox>
            <BtnLine>Comentario</BtnLine>
          </RibbonButton>
        </GroupBody>
        <GroupLabel>Comentarios</GroupLabel>
      </RibbonGroup>

      <RibbonGroup $w={255}>
        <GroupBody $gap={5}>
          <RibbonButton $w={65}>
            <IconBox><TextBoxIcon /></IconBox>
            <BtnLine>Cuadro</BtnLine>
            <BtnLine>de texto</BtnLine>
          </RibbonButton>
          <RibbonButton $w={68}>
            <IconBox><HeaderFooterIcon /></IconBox>
            <BtnLine>Encabez.</BtnLine>
            <BtnLine>pie pág.</BtnLine>
          </RibbonButton>
          <RibbonButton $w={68}>
            <IconBox><WordArtIcon /></IconBox>
            <BtnLine>WordArt</BtnLine>
            <BtnLine><Caret /></BtnLine>
          </RibbonButton>
          <SmallIcons>
            <DateIcon />
            <NumberIcon />
            <ObjectIcon />
          </SmallIcons>
        </GroupBody>
        <GroupLabel>Texto</GroupLabel>
      </RibbonGroup>

      <RibbonGroup $w={150}>
        <GroupBody>
          <RibbonButton $w={70} $off>
            <IconBox><PiIcon /></IconBox>
            <BtnLine>Ecuación</BtnLine>
            <BtnLine><Caret $c="#bbb" /></BtnLine>
          </RibbonButton>
        </GroupBody>
        <GroupLabel>Símbolos</GroupLabel>
      </RibbonGroup>
    </Ribbon>

    <Workspace>
      <SlidesPane>
        <SlideNumber>4</SlideNumber>
        <SlideThumb>Nueva diapositiva</SlideThumb>
      </SlidesPane>
      <MainColumn>
        <Canvas>
          <Slide>
            <TextBox>
              <TextClip>
                {SECTIONS.map((s, i) => (
                  <Section key={i} $mb={s.mb}>
                    <SectionHead>{s.head}</SectionHead>
                    {LOREM.map((line, j) => (
                      <BodyLine key={j}>{line}</BodyLine>
                    ))}
                  </Section>
                ))}
              </TextClip>
              {HANDLES.map(([x, y]) => (
                <Handle key={`${x}-${y}`} $x={x} $y={y} />
              ))}
            </TextBox>
          </Slide>
        </Canvas>
        <Notes>Notas a la parte 1/contenido de la diapositiva 2</Notes>
      </MainColumn>
    </Workspace>

    <Menu>
      <MenuHead>Tema de Office</MenuHead>
      <LayoutGrid>
        {LAYOUTS.map((l) => (
          <LayoutCell key={l.name}>
            <LayoutThumb>
              {l.boxes.map((b, i) => (
                <Placeholder key={i} $x={b.x} $y={b.y} $w={b.w} $h={b.h} />
              ))}
              {(l.minis || []).map((m, i) => (
                <MiniWrap key={i} $x={m.x} $y={m.y}>
                  <MiniContent single={m.single} />
                </MiniWrap>
              ))}
            </LayoutThumb>
            <LayoutName>{l.name}</LayoutName>
          </LayoutCell>
        ))}
      </LayoutGrid>
      <MenuList>
        <MenuItem>
          <DuplicateIcon />
          <span><u>D</u>uplicar diapositivas seleccionadas</span>
        </MenuItem>
        <SelectedItem>
          <OutlineIcon />
          <span>Diapo<u>s</u>itivas del esquema...</span>
        </SelectedItem>
        <MenuItem>
          <ReuseIcon />
          <span><u>V</u>olver a utilizar diapositivas...</span>
        </MenuItem>
      </MenuList>
    </Menu>
  </Page>
);

export default App;
